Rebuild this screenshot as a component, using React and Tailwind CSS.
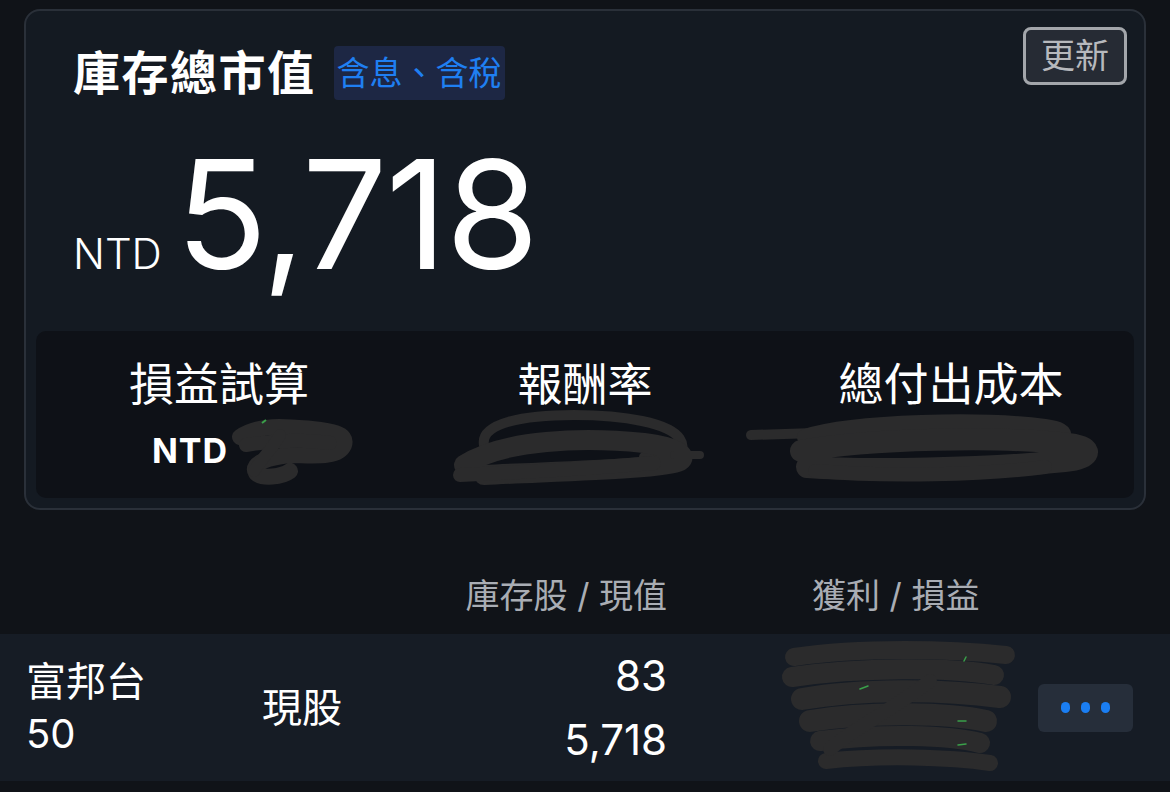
import React from 'react'

const FONT = { fontFamily: 'Inter, "Noto Sans CJK TC", "Noto Sans CJK SC", sans-serif' }
const INK = '#2b2b2c'

// redacted scribbles drawn over hidden numbers
function ScribbleA() {
  return (
    <svg width="140" height="70" viewBox="0 0 140 70" className="shrink-0">
      <g fill="none" stroke={INK} strokeLinecap="round" strokeLinejoin="round">
        <path d="M20 22 C40 8 70 12 92 14 C110 16 128 18 124 30 C118 44 90 40 70 40 C50 42 30 48 36 58 C42 64 62 62 70 56" strokeWidth="16" />
        <path d="M26 30 C50 26 80 24 110 28" strokeWidth="14" />
        <path d="M60 20 C52 34 40 46 34 56" strokeWidth="12" />
      </g>
      <path d="M42 8 l4 -3" stroke="#3aa04a" strokeWidth="2" />
    </svg>
  )
}

function ScribbleB() {
  return (
    <svg width="262" height="80" viewBox="0 0 262 80" className="shrink-0">
      <g fill="none" stroke={INK} strokeLinecap="round" strokeLinejoin="round">
        <path d="M40 36 C36 14 80 6 130 6 C180 6 226 14 236 30 C244 42 232 50 200 48" strokeWidth="10" />
        <path d="M20 56 C60 30 140 28 200 34 C232 38 244 46 236 52 C220 60 120 62 40 66" strokeWidth="20" />
        <path d="M16 66 C60 64 140 60 210 54" strokeWidth="14" />
        <path d="M230 46 L256 46" strokeWidth="8" />
      </g>
    </svg>
  )
}

function ScribbleC() {
  return (
    <svg width="356" height="72" viewBox="0 0 356 72" className="shrink-0">
      <g fill="none" stroke={INK} strokeLinecap="round" strokeLinejoin="round">
        <path d="M6 22 L70 20" strokeWidth="10" />
        <path d="M60 24 C110 8 240 6 300 14 C330 18 320 28 290 30" strokeWidth="16" />
        <path d="M56 38 C120 26 260 22 330 32 C350 36 344 46 320 48 C240 56 120 58 62 54" strokeWidth="22" />
        <path d="M70 58 C140 64 240 62 300 54" strokeWidth="14" />
      </g>
    </svg>
  )
}

function ScribbleD() {
  return (
    <svg width="236" height="134" viewBox="0 0 236 134" className="shrink-0">
      <g fill="none" stroke={INK} strokeLinecap="round" strokeLinejoin="round">
        <path d="M14 16 C80 6 170 8 226 14" strokeWidth="18" />
        <path d="M12 36 C80 26 170 26 214 34" strokeWidth="20" />
        <path d="M22 58 C80 48 160 48 220 56" strokeWidth="22" />
        <path d="M30 80 C90 70 170 72 206 80" strokeWidth="22" />
        <path d="M40 100 C100 92 170 94 200 102" strokeWidth="20" />
        <path d="M46 120 C100 114 170 116 210 122" strokeWidth="16" />
        <path d="M150 40 C110 70 70 90 50 108" strokeWidth="14" />
      </g>
      <g stroke="#3aa04a" strokeWidth="1.5" strokeLinecap="round">
        <path d="M184 20 l2 -4" />
        <path d="M80 48 l8 -3" />
        <path d="M178 80 l8 0" />
        <path d="M178 104 l8 -1" />
      </g>
    </svg>
  )
}

export default function App() {
  return (
    <div className="w-[1170px] h-[792px] bg-[#101318] overflow-hidden text-white" style={FONT}>
      {/* summary card */}
      <div className="ml-[24px] mt-[9px] w-[1122px] h-[501px] rounded-[16px] border-2 border-[#2a3039] bg-[#141a22] flex flex-col px-[10px] pb-[10px]">
        <div className="flex justify-between">
          <div className="flex items-center mt-[35px] ml-[37px] gap-[18px]">
            <span className="text-[47px] leading-[54px] font-semibold tracking-[1.5px]">庫存總市值</span>
            <span className="h-[54px] px-[3px] rounded-[4px] bg-[#1d2744] text-[#1f7ff2] text-[33px] leading-[54px]">含息、含稅</span>
          </div>
          <button className="mt-[16px] mr-[7px] w-[104px] h-[58px] rounded-[8px] border-[3px] border-[#a3a6ab] bg-[#262b34] text-[#b7b9bd] text-[34px] leading-none">更新</button>
        </div>

        <div className="flex items-baseline ml-[37px] mt-[39px] gap-[14px]">
          <span className="text-[42px] font-light">NTD</span>
          <span className="text-[151px] leading-none font-normal tracking-[-1.5px]">5,718</span>
        </div>

        <div className="mt-auto h-[167px] rounded-[10px] bg-[#0e1117] grid grid-cols-3">
          <div className="flex flex-col items-center pt-[26px]">
            <span className="text-[45px] leading-[56px]">損益試算</span>
            <div className="flex items-center mt-[2px] ml-[74px]">
              <span className="text-[34px] font-bold tracking-[1px]">NTD</span>
              <div className="-ml-[8px]"><ScribbleA /></div>
            </div>
          </div>
          <div className="flex flex-col items-center pt-[26px]">
            <span className="text-[45px] leading-[56px]">報酬率</span>
            <div className="mt-[-4px] -ml-[20px]"><ScribbleB /></div>
          </div>
          <div className="flex flex-col items-center pt-[26px]">
            <span className="text-[45px] leading-[56px]">總付出成本</span>
            <div className="mt-[0px] -ml-[56px]"><ScribbleC /></div>
          </div>
        </div>
      </div>

      {/* list header */}
      <div className="flex items-end h-[124px] pb-[15px] text-[#a9adb4] text-[34px] leading-[47px]">
        <div className="w-[412px]" />
        <div className="w-[255px] text-right">庫存股 / 現值</div>
        <div className="pl-[145px]">獲利 / 損益</div>
      </div>

      {/* holding row */}
      <div className="flex items-center h-[147px] bg-[#161c25] pl-[26px]">
        <div className="w-[236px] flex flex-col text-[40px] leading-[52px]">
          <span>富邦台</span>
          <span>50</span>
        </div>
        <div className="w-[150px] text-[40px] leading-[52px]">現股</div>
        <div className="w-[255px] flex flex-col items-end text-[42px] leading-[64px]">
          <span>83</span>
          <span>5,718</span>
        </div>
        <div className="w-[371px] pl-[113px] flex items-center">
          <ScribbleD />
        </div>
        <div className="w-[95px] h-[48px] rounded-[6px] bg-[#262e3a] flex items-center justify-center gap-[11px]">
          <span className="w-[9px] h-[11px] rounded-full bg-[#1a7ef2]" />
          <span className="w-[9px] h-[11px] rounded-full bg-[#1a7ef2]" />
          <span className="w-[9px] h-[11px] rounded-full bg-[#1a7ef2]" />
        </div>
      </div>
    </div>
  )
}
